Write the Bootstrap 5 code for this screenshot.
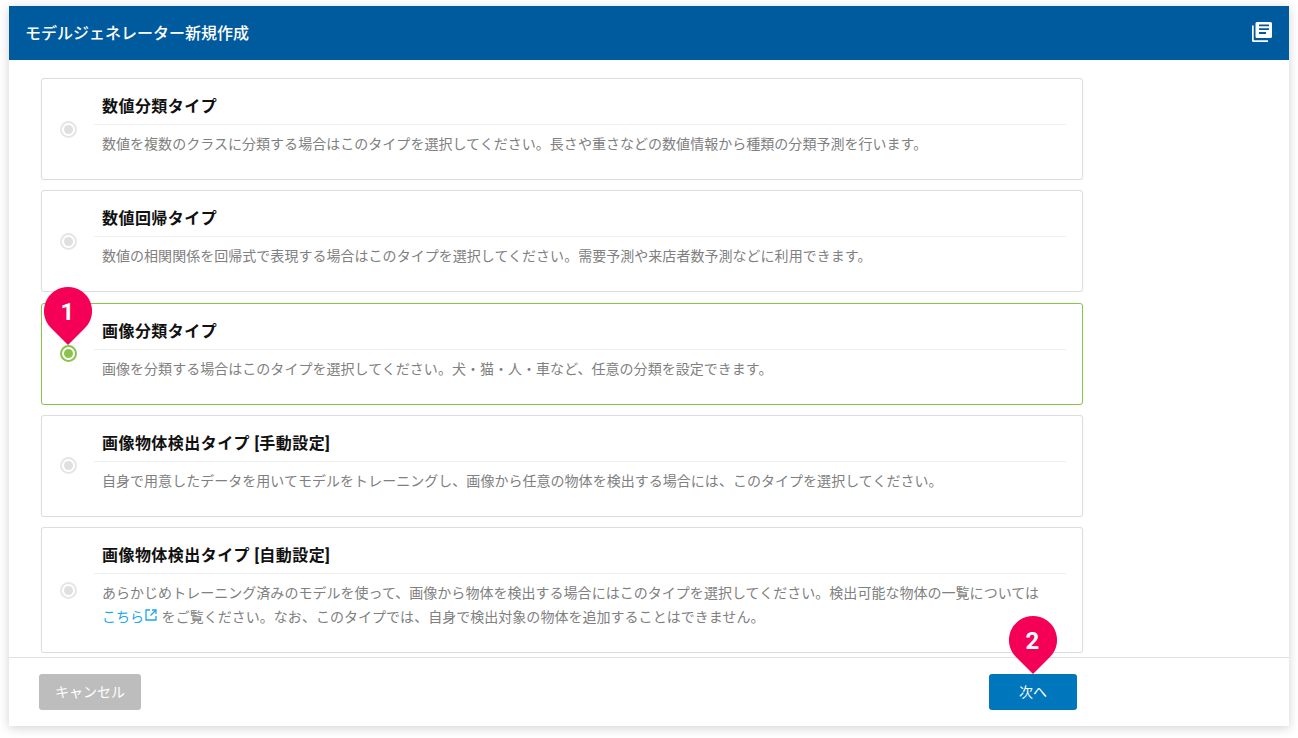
<!DOCTYPE html>
<html lang="ja">
<head>
<meta charset="utf-8">
<title>モデルジェネレーター新規作成</title>
<link href="https://cdn.jsdelivr.net/npm/bootstrap@5.3.0/dist/css/bootstrap.min.css" rel="stylesheet">
<style>
html,body{height:100%;}
body{background:#fff;font-family:Roboto,"Noto Sans CJK JP",sans-serif;padding:6px 9px 12px;overflow:hidden;}
.panel-win{position:relative;height:720px;background:#fff;box-shadow:0 2px 10px rgba(0,0,0,.18);display:flex;flex-direction:column;}
.panel-head{height:54px;background:#005a9e;color:#fff;font-size:16px;font-weight:500;padding:0 17px 0 16px;}
.head-text{padding-top:2px;}
.head-icon{margin-top:-2px;}
.panel-body{flex:1;padding:18px 206px 0 32px;display:flex;flex-direction:column;gap:10.3px;overflow:hidden;}
.type-box{border:1px solid #ddd;border-radius:3px;box-shadow:0 0 2px rgba(0,0,0,.06);height:102px;display:flex;background:#fff;flex:none;}
.type-box.tall{height:126px;}
.type-box.on{border-color:#8bc34a;}
.radio-zone{width:52px;flex:none;display:flex;align-items:center;justify-content:center;}
.radio-dot{width:17px;height:17px;border-radius:50%;border:2px solid #e6e6e6;position:relative;background:#fff;}
.radio-dot::after{content:"";position:absolute;inset:2px;border-radius:50%;background:#e0e0e0;}
.on .radio-dot{border-color:#8bc34a;}
.on .radio-dot::after{background:#8bc34a;}
.type-main{flex:1;padding-right:16px;min-width:0;}
.type-title{font-size:16px;font-weight:700;color:#111;height:46px;line-height:24px;padding:16px 0 0 8px;border-bottom:1px solid #eee;box-sizing:border-box;letter-spacing:.45px;}
.type-desc{font-size:14px;line-height:24px;color:#808080;padding:7px 0 0 8px;margin:0;letter-spacing:.03px;}
.type-desc a{color:#1ea7f0;text-decoration:none;}
.ext-icon{vertical-align:4px;margin:-3px 1px -3px 1px;}
.panel-foot{height:69px;border-top:1px solid #e0e0e0;padding:16px 212px 0 30px;display:flex;justify-content:space-between;align-items:flex-start;flex:none;}
.btn-cancel{width:102px;height:36px;background:#bdbdbd;border:0;border-radius:3px;color:#fff;font-size:14px;padding:0;}
.btn-next{width:88px;height:36px;background:#0077bd;border:0;border-radius:3px;color:#fff;font-size:14px;padding:0;}
.pin{position:absolute;width:48px;height:58px;}
.pin svg{position:absolute;inset:0;}
.pin b{position:absolute;left:0;right:0;top:10px;text-align:center;font-size:24px;line-height:30px;font-weight:700;color:#fff;margin-left:-1px;}
.pin-one{left:35px;top:281px;}
.pin-two{left:1000px;top:610px;}
</style>
</head>
<body>
<div class="panel-win">
  <div class="panel-head d-flex align-items-center justify-content-between">
    <span class="head-text">モデルジェネレーター新規作成</span>
    <svg class="head-icon" width="20" height="20" viewBox="0 0 20 20" fill="#fff" aria-hidden="true"><path d="M0 3.500h1.700v14.800H16V20H1.500A1.500 1.500 0 0 1 0 18.500z"/><path fill-rule="evenodd" d="M5 0h13.500A1.500 1.500 0 0 1 20 1.500v13a1.500 1.500 0 0 1-1.500 1.500H5a1.500 1.500 0 0 1-1.500-1.500v-13A1.500 1.500 0 0 1 5 0zM7 2.500v1.800h10V2.500zM7 6.300v1.800h10V6.300zM7 10.100v1.800h7v-1.800z"/></svg>
  </div>
  <div class="panel-body">
    <div class="type-box"><div class="radio-zone"><span class="radio-dot"></span></div><div class="type-main"><div class="type-title">数値分類タイプ</div><p class="type-desc">数値を複数のクラスに分類する場合はこのタイプを選択してください。長さや重さなどの数値情報から種類の分類予測を行います。</p></div></div>
    <div class="type-box"><div class="radio-zone"><span class="radio-dot"></span></div><div class="type-main"><div class="type-title">数値回帰タイプ</div><p class="type-desc">数値の相関関係を回帰式で表現する場合はこのタイプを選択してください。需要予測や来店者数予測などに利用できます。</p></div></div>
    <div class="type-box on"><div class="radio-zone"><span class="radio-dot"></span></div><div class="type-main"><div class="type-title">画像分類タイプ</div><p class="type-desc">画像を分類する場合はこのタイプを選択してください。犬・猫・人・車など、任意の分類を設定できます。</p></div></div>
    <div class="type-box"><div class="radio-zone"><span class="radio-dot"></span></div><div class="type-main"><div class="type-title">画像物体検出タイプ [手動設定]</div><p class="type-desc">自身で用意したデータを用いてモデルをトレーニングし、画像から任意の物体を検出する場合には、このタイプを選択してください。</p></div></div>
    <div class="type-box tall"><div class="radio-zone"><span class="radio-dot"></span></div><div class="type-main"><div class="type-title">画像物体検出タイプ [自動設定]</div><p class="type-desc">あらかじめトレーニング済みのモデルを使って、画像から物体を検出する場合にはこのタイプを選択してください。検出可能な物体の一覧については<br><a href="#">こちら<svg class="ext-icon" width="12" height="12" viewBox="0 0 12 12" fill="none" stroke="#1ea7f0" stroke-width="1.300"><path d="M5 1H1v10h10V7"/><path d="M7 1h4v4M11 1 5.500 6.500"/></svg></a> をご覧ください。なお、このタイプでは、自身で検出対象の物体を追加することはできません。</p></div></div>
  </div>
  <div class="panel-foot">
    <button class="btn btn-cancel" type="button">キャンセル</button>
    <button class="btn btn-next" type="button">次へ</button>
  </div>
  <div class="pin pin-one"><svg width="48" height="58" viewBox="0 0 48 58"><path fill="#f50057" d="M24 0a24 24 0 0 1 17 41L24 58 7 41A24 24 0 0 1 24 0z"/></svg><b>1</b></div>
  <div class="pin pin-two"><svg width="48" height="58" viewBox="0 0 48 58"><path fill="#f50057" d="M24 0a24 24 0 0 1 17 41L24 58 7 41A24 24 0 0 1 24 0z"/></svg><b>2</b></div>
</div>
<script src="https://cdn.jsdelivr.net/npm/bootstrap@5.3.0/dist/js/bootstrap.bundle.min.js"></script>
</body>
</html>
